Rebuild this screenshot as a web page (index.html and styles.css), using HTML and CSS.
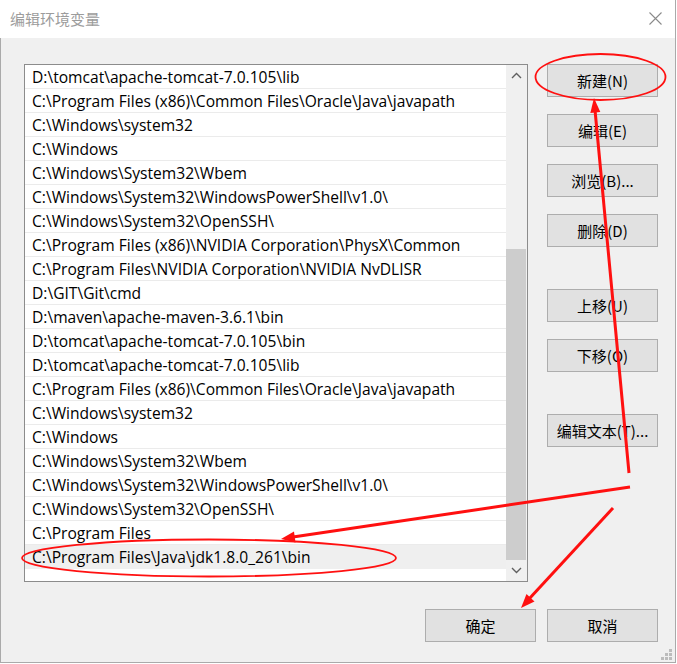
FILE: index.html
```html
<!DOCTYPE html>
<html lang="zh-CN">

<head>
    <meta charset="UTF-8">
    <meta name="viewport" content="width=device-width, initial-scale=1.0">
    <title>编辑环境变量</title>
    <link rel="stylesheet" href="styles.css">
</head>

<body>
    <div class="window">
        <!-- 标题栏 -->
        <div class="titlebar">
            <span class="title">编辑环境变量</span>
            <svg class="close" width="13" height="13" viewBox="0 0 13 13">
                <path d="M0.5 0.5 L12.5 12.5 M12.5 0.5 L0.5 12.5" stroke="#8a8a8a" stroke-width="1.1" fill="none"/>
            </svg>
        </div>

        <div class="content">
            <!-- 路径列表 -->
            <div class="listbox">
                <div class="rows">
                    <div class="row">D:\tomcat\apache-tomcat-7.0.105\lib</div>
                    <div class="row">C:\Program Files (x86)\Common Files\Oracle\Java\javapath</div>
                    <div class="row">C:\Windows\system32</div>
                    <div class="row">C:\Windows</div>
                    <div class="row">C:\Windows\System32\Wbem</div>
                    <div class="row">C:\Windows\System32\WindowsPowerShell\v1.0\</div>
                    <div class="row">C:\Windows\System32\OpenSSH\</div>
                    <div class="row">C:\Program Files (x86)\NVIDIA Corporation\PhysX\Common</div>
                    <div class="row">C:\Program Files\NVIDIA Corporation\NVIDIA NvDLISR</div>
                    <div class="row">D:\GIT\Git\cmd</div>
                    <div class="row">D:\maven\apache-maven-3.6.1\bin</div>
                    <div class="row">D:\tomcat\apache-tomcat-7.0.105\bin</div>
                    <div class="row">D:\tomcat\apache-tomcat-7.0.105\lib</div>
                    <div class="row">C:\Program Files (x86)\Common Files\Oracle\Java\javapath</div>
                    <div class="row">C:\Windows\system32</div>
                    <div class="row">C:\Windows</div>
                    <div class="row">C:\Windows\System32\Wbem</div>
                    <div class="row">C:\Windows\System32\WindowsPowerShell\v1.0\</div>
                    <div class="row">C:\Windows\System32\OpenSSH\</div>
                    <div class="row">C:\Program Files</div>
                    <div class="row selected">C:\Program Files\Java\jdk1.8.0_261\bin</div>
                </div>
                <!-- 滚动条 -->
                <div class="scrollbar">
                    <div class="arrow">
                        <svg width="11" height="7" viewBox="0 0 11 7">
                            <path d="M1 6 L5.5 1.5 L10 6" stroke="#606060" stroke-width="1.4" fill="none"/>
                        </svg>
                    </div>
                    <div class="track">
                        <div class="thumb"></div>
                    </div>
                    <div class="arrow">
                        <svg width="11" height="7" viewBox="0 0 11 7">
                            <path d="M1 1 L5.5 5.5 L10 1" stroke="#606060" stroke-width="1.4" fill="none"/>
                        </svg>
                    </div>
                </div>
            </div>

            <!-- 右侧按钮 -->
            <div class="side">
                <div class="btn">新建(N)</div>
                <div class="btn">编辑(E)</div>
                <div class="btn">浏览(B)...</div>
                <div class="btn">删除(D)</div>
                <div class="btn gap">上移(U)</div>
                <div class="btn">下移(O)</div>
                <div class="btn gap">编辑文本(T)...</div>
            </div>
        </div>

        <div class="footer">
            <div class="btn">确定</div>
            <div class="btn">取消</div>
        </div>

        <!-- 右下角拖动小点 -->
        <svg class="grip" width="11" height="11" viewBox="0 0 11 11">
            <rect x="8" y="0" width="3" height="3"/>
            <rect x="4" y="4" width="3" height="3"/>
            <rect x="8" y="4" width="3" height="3"/>
            <rect x="0" y="8" width="3" height="3"/>
            <rect x="4" y="8" width="3" height="3"/>
            <rect x="8" y="8" width="3" height="3"/>
        </svg>
    </div>

    <!-- 红色标注 -->
    <svg class="marks" width="677" height="664" viewBox="0 0 677 664">
        <g stroke="#ff1010" fill="none">
            <ellipse cx="600.5" cy="77" rx="65" ry="23" stroke-width="1.8"/>
            <ellipse cx="209" cy="558" rx="187" ry="18.5" stroke-width="1.8"/>
            <line x1="629" y1="473" x2="595" y2="110" stroke-width="3"/>
            <line x1="630" y1="487" x2="293" y2="537" stroke-width="3"/>
            <line x1="613" y1="508" x2="529" y2="599" stroke-width="3"/>
        </g>
        <g fill="#ff1010">
            <polygon points="594,98 600.3,112 590.3,113"/>
            <polygon points="281,539 295.5,542.5 294,531.5"/>
            <polygon points="521,608 534.5,601.5 526.5,594"/>
        </g>
    </svg>
</body>

</html>
```

FILE: styles.css
```css
* {
    margin: 0;
    padding: 0;
    box-sizing: border-box;
}

body {
    background-color: #fff;
    font-family: "Noto Sans CJK SC", sans-serif;
    font-size: 15px;
    color: #000;
}

/* 整个窗口 */
.window {
    position: relative;
    width: 676px;
    height: 663px;
    background-color: #f0f0f0;
    border: 1px solid #aaa;
    border-top: 0;
}

.titlebar {
    display: flex;
    align-items: center;
    justify-content: space-between;
    height: 38px;
    margin-left: -1px;
    padding: 0 13px 2px 10px;
    background-color: #fff;
}

.title {
    color: #9c9c9c;
    font-size: 15px;
}

.content {
    display: flex;
    gap: 19px;
    padding: 26px 17px 0 23px;
}

/* 列表框 */
.listbox {
    display: flex;
    width: 504px;
    height: 518px;
    background-color: #fff;
    border: 1px solid #8c8c8c;
}

.rows {
    flex: 1;
}

.row {
    height: 24px;
    padding: 1px 0 0 7px;
    line-height: 22px;
    border-bottom: 1px solid #ebebeb;
    font-family: "Open Sans", "Noto Sans CJK SC", sans-serif;
    font-size: 15.6px;
    white-space: nowrap;
    overflow: hidden;
}

.row.selected {
    background-color: #efefef;
    border-bottom-color: #efefef;
}

.scrollbar {
    display: flex;
    flex-direction: column;
    width: 21px;
    background-color: #f0f0f0;
}

.arrow {
    display: flex;
    align-items: center;
    justify-content: center;
    height: 21px;
    padding-right: 1px;
}

.track {
    flex: 1;
    display: flex;
    flex-direction: column;
    justify-content: flex-end;
}

.thumb {
    height: 311px;
    margin: 0 1px 0 0;
    background-color: #cdcdcd;
}

/* 按钮 */
.btn {
    display: flex;
    align-items: center;
    justify-content: center;
    width: 111px;
    height: 33px;
    background-color: #e1e1e1;
    border: 1px solid #adadad;
    font-size: 15px;
    padding-bottom: 1px;
}

.side {
    display: flex;
    flex-direction: column;
    gap: 17px;
}

.side .gap {
    margin-top: 25px;
}

.footer {
    display: flex;
    justify-content: flex-end;
    gap: 11px;
    padding: 27px 17px 0 0;
}

.grip {
    position: absolute;
    right: 3px;
    bottom: 2px;
    fill: #bcbcbc;
}

/* 标注盖在最上面 */
.marks {
    position: absolute;
    left: 0;
    top: 0;
    pointer-events: none;
}
```
